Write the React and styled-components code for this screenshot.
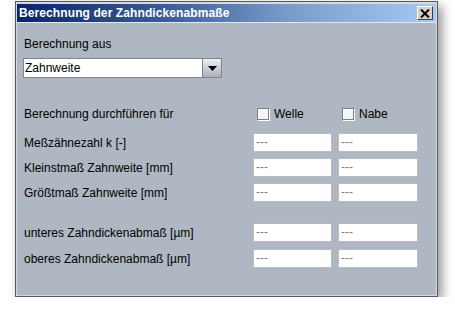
import React from 'react';
import styled, { createGlobalStyle } from 'styled-components';

const GlobalStyle = createGlobalStyle`
  html, body {
    margin: 0;
    padding: 0;
    background: #ffffff;
  }
  body {
    font-family: 'Liberation Sans', Arial, sans-serif;
    font-size: 12px;
    color: #000;
  }
`;

// Window frame
const Frame = styled.div`
  margin: 1px 0 0 15px;
  width: 423px;
  height: 296px;
  border: 1px solid #555a60;
  padding: 1px;
  box-sizing: border-box;
  background: #d6d9de;
  box-shadow: 4px 5px 10px rgba(0, 0, 0, 0.42);
  display: flex;
  flex-direction: column;
`;

const TitleBar = styled.div`
  height: 18px;
  margin-top: 1px;
  display: flex;
  align-items: center;
  justify-content: space-between;
  padding: 0 3px 0 2px;
  background: linear-gradient(90deg, #0a246a 0%, #3a5b9a 35%, #7b9ccb 65%, #a6caf0 100%);
  border-bottom: 1px solid #e4e8ee;
`;

const Title = styled.span`
  color: #fff;
  font-weight: bold;
  font-size: 12px;
  letter-spacing: 0.1px;
`;

const CloseButton = styled.div`
  width: 16px;
  height: 14px;
  box-sizing: border-box;
  background: #d4d0c8;
  border-top: 1px solid #ffffff;
  border-left: 1px solid #ffffff;
  border-right: 1px solid #404040;
  border-bottom: 1px solid #404040;
  display: flex;
  align-items: center;
  justify-content: center;
`;

const Body = styled.div`
  flex: 1;
  background: #afb8c2;
  padding: 14px 0 0 6px;
  display: flex;
  flex-direction: column;
`;

const Label = styled.div`
  line-height: 14px;
  padding-left: 1px;
  white-space: nowrap;
`;

const Combo = styled.div`
  margin-top: ${p => p.$top || 0}px;
  width: 199px;
  height: 20px;
  box-sizing: border-box;
  border: 1px solid #7c8490;
  background: #fff;
  display: flex;
  align-items: stretch;
`;

const ComboText = styled.div`
  flex: 1;
  line-height: 18px;
  padding-left: 1px;
`;

const ComboArrow = styled.div`
  width: 18px;
  border-left: 1px solid #7c8490;
  background: linear-gradient(180deg, #eef0f2 0%, #c4c9cf 60%, #a9afb6 100%);
  display: flex;
  align-items: center;
  justify-content: center;
`;

const Row = styled.div`
  margin-top: ${p => p.$top || 0}px;
  height: 19px;
  display: grid;
  grid-template-columns: 224px 79px 80px;
  column-gap: 6px;
  align-items: center;
`;

const CheckCell = styled.label`
  display: flex;
  align-items: center;
  gap: 5px;
  padding-left: 4px;
`;

const CheckBox = styled.span`
  width: 12px;
  height: 12px;
  box-sizing: border-box;
  background: #f4f5f6;
  border: 1px solid #7a7f86;
  box-shadow: inset 1px 1px 0 #ffffff, 1px 1px 0 #ffffff;
`;

const Field = styled.div`
  height: 19px;
  box-sizing: border-box;
  background: #fff;
  border: 1px solid #b9bcc0;
  color: #808080;
  line-height: 17px;
  padding-left: 2px;
  font-size: 12px;
`;

const fieldRows = [
  { label: 'Meßzähnezahl k [-]', top: 10 },
  { label: 'Kleinstmaß Zahnweite [mm]', top: 6 },
  { label: 'Größtmaß Zahnweite [mm]', top: 6 },
  { label: 'unteres Zahndickenabmaß [µm]', top: 21 },
  { label: 'oberes Zahndickenabmaß [µm]', top: 7 },
];

const App = () => {
  return (
    <>
      <GlobalStyle />
      <Frame>
        <TitleBar>
          <Title>Berechnung der Zahndickenabmaße</Title>
          <CloseButton>
            <svg width="10" height="9" viewBox="0 0 10 9">
              <path d="M1 0.5 L9 8.5 M9 0.5 L1 8.5" stroke="#000" strokeWidth="2" />
            </svg>
          </CloseButton>
        </TitleBar>
        <Body>
          <Label>Berechnung aus</Label>
          <Combo $top={7}>
            <ComboText>Zahnweite</ComboText>
            <ComboArrow>
              <svg width="9" height="5" viewBox="0 0 9 5">
                <path d="M0 0 H9 L4.5 5 Z" fill="#000" />
              </svg>
            </ComboArrow>
          </Combo>
          <Row $top={26}>
            <Label>Berechnung durchführen für</Label>
            <CheckCell>
              <CheckBox />
              Welle
            </CheckCell>
            <CheckCell>
              <CheckBox />
              Nabe
            </CheckCell>
          </Row>
          {fieldRows.map(r => (
            <Row key={r.label} $top={r.top}>
              <Label>{r.label}</Label>
              <Field>---</Field>
              <Field>---</Field>
            </Row>
          ))}
        </Body>
      </Frame>
    </>
  );
};

export default App;
